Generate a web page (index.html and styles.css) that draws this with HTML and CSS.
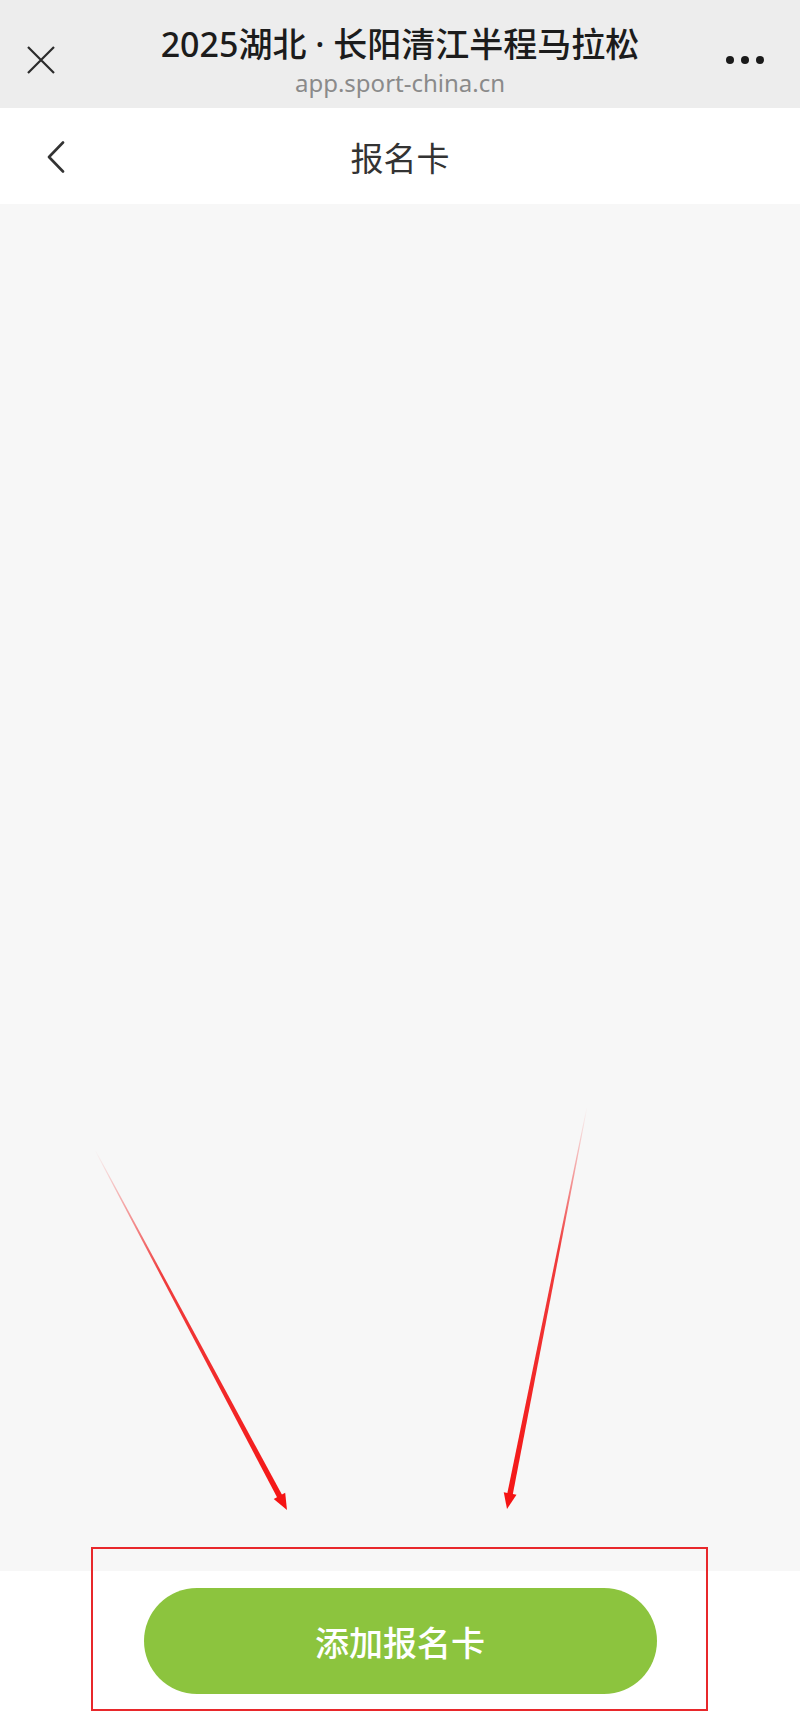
FILE: index.html
```html
<!DOCTYPE html>
<html lang="zh-CN">
<head>
	<meta charset="UTF-8">
	<title>报名卡</title>
	<link rel="stylesheet" href="styles.css">
</head>
<body>
	<div class="page">
		<!-- 微信内置浏览器顶栏 -->
		<div class="topbar">
			<span class="close">
				<svg width="28" height="28" viewBox="0 0 28 28"><path d="M1 1L27 27M27 1L1 27" stroke="#2b2b2b" stroke-width="2.2" fill="none"/></svg>
			</span>
			<div class="topbar-title">
				<p class="title">2025湖北 · 长阳清江半程马拉松</p>
				<p class="url">app.sport-china.cn</p>
			</div>
			<span class="more"><i></i><i></i><i></i></span>
		</div>
		<!-- 页面标题 -->
		<div class="navbar">
			<span class="back">
				<svg width="20" height="32" viewBox="0 0 20 32"><path d="M17 1.5L3 16L17 30.5" stroke="#333" stroke-width="2.6" fill="none" stroke-linejoin="round" stroke-linecap="round"/></svg>
			</span>
			<h1 class="nav-title">报名卡</h1>
		</div>
		<div class="content"></div>
		<div class="footer">
			<button class="add-btn">添加报名卡</button>
		</div>

		<!-- 标注：箭头和红框 -->
		<svg class="marks" width="800" height="1723" viewBox="0 0 800 1723">
			<defs>
				<linearGradient id="fadeL" gradientUnits="userSpaceOnUse" x1="0" y1="0" x2="0" y2="408">
					<stop offset="0" stop-color="#ee1c1c" stop-opacity="0"/>
					<stop offset="0.35" stop-color="#ee1c1c" stop-opacity="0.85"/>
					<stop offset="1" stop-color="#f51414"/>
				</linearGradient>
				<linearGradient id="fadeR" gradientUnits="userSpaceOnUse" x1="0" y1="0" x2="0" y2="410">
					<stop offset="0" stop-color="#ee1c1c" stop-opacity="0"/>
					<stop offset="0.35" stop-color="#ee1c1c" stop-opacity="0.85"/>
					<stop offset="1" stop-color="#f51414"/>
				</linearGradient>
			</defs>
			<g transform="translate(95 1150) rotate(-28.07)">
				<polygon points="-0.4,0 0.4,0 2.8,396 -2.8,396" fill="url(#fadeL)"/>
				<polygon points="-6.5,392 6.5,392 0,408" fill="#f51414"/>
			</g>
			<g transform="translate(587 1107) rotate(11.25)">
				<polygon points="-0.4,0 0.4,0 2.8,398 -2.8,398" fill="url(#fadeR)"/>
				<polygon points="-6.5,394 6.5,394 0,410" fill="#f51414"/>
			</g>
		</svg>
		<div class="frame"></div>
	</div>
</body>
</html>
```

FILE: styles.css
```css
*{
	margin: 0;
	padding: 0;
	box-sizing: border-box;
}
body{
	font-family: "Noto Sans", "Noto Sans CJK SC", sans-serif;
	background: #fff;
}
.page{
	position: relative;
	width: 800px;
	height: 1723px;
	display: flex;
	flex-direction: column;
}
.topbar{
	height: 108px;
	background: #ededed;
	display: grid;
	grid-template-columns: 80px 1fr 80px;
	align-items: center;
}
.close{
	display: flex;
	justify-content: center;
	padding-left: 1px;
	margin-top: 12px;
}
.topbar-title{
	text-align: center;
	padding-top: 14px;
}
.title{
	font-size: 34px;
	font-weight: 500;
	color: #1c1c1c;
	line-height: 42px;
}
.url{
	font-size: 24px;
	color: #8a8a8a;
	line-height: 32px;
	margin-top: 2px;
}
.more{
	display: flex;
	gap: 7px;
	padding-left: 6px;
	margin-top: 12px;
}
.more i{
	width: 8px;
	height: 8px;
	border-radius: 50%;
	background: #1a1a1a;
}
.navbar{
	height: 96px;
	background: #fff;
	display: flex;
	align-items: center;
	position: relative;
}
.back{
	display: flex;
	padding-left: 46px;
	margin-top: 1px;
}
.nav-title{
	position: absolute;
	left: 0;
	right: 0;
	text-align: center;
	font-family: "Noto Sans CJK SC", sans-serif;
	font-size: 33px;
	font-weight: 400;
	color: #333;
	line-height: 96px;
	margin-top: 2px;
}
.content{
	flex: 1;
	background: #f7f7f7;
}
.footer{
	height: 152px;
	background: #fff;
	display: flex;
	justify-content: center;
	padding-top: 17px;
}
.add-btn{
	width: 513px;
	height: 106px;
	border: none;
	border-radius: 53px;
	background: #8cc43e;
	color: #fff;
	font-family: "Noto Sans CJK SC", sans-serif;
	font-size: 34px;
	font-weight: 500;
}
.marks{
	position: absolute;
	top: 0;
	left: 0;
	pointer-events: none;
}
.frame{
	position: absolute;
	left: 91px;
	top: 1547px;
	width: 617px;
	height: 164px;
	border: 2px solid #e8282b;
	pointer-events: none;
}
```
